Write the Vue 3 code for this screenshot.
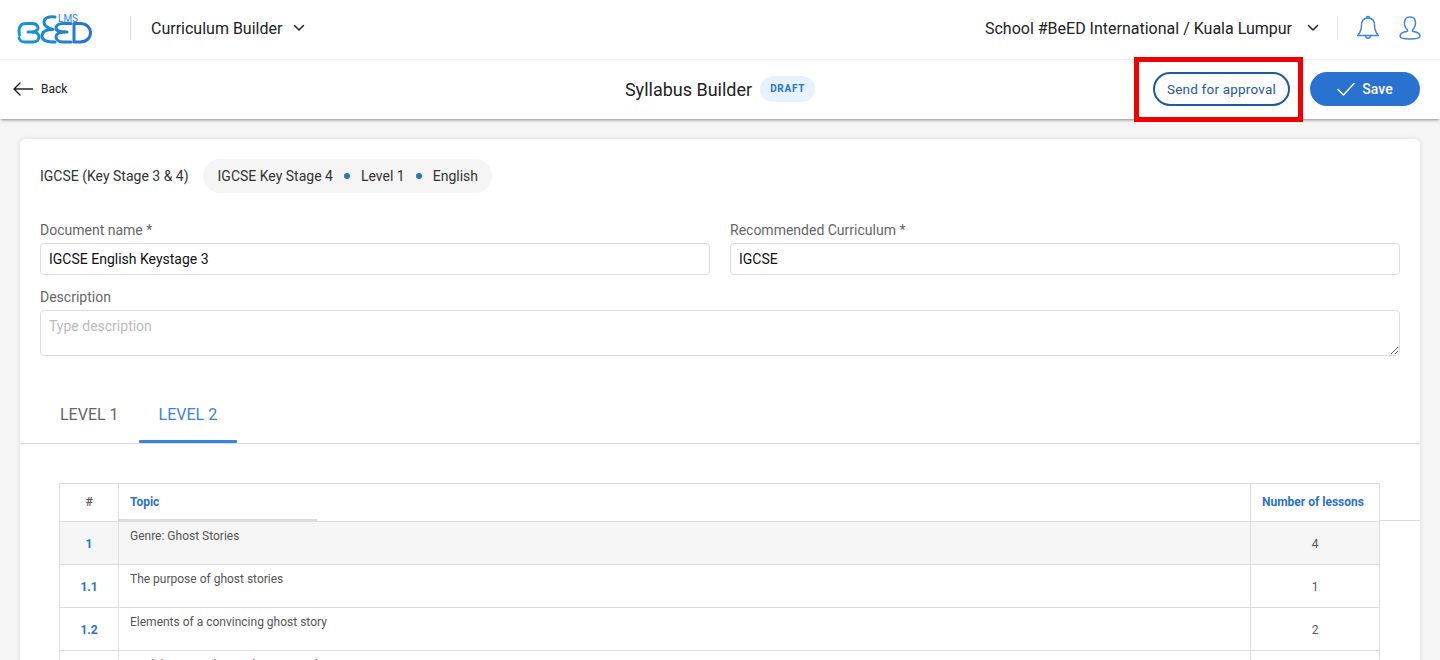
<script setup>
const rows = [
  { n: '1', topic: 'Genre: Ghost Stories', lessons: 4, head: true },
  { n: '1.1', topic: 'The purpose of ghost stories', lessons: 1 },
  { n: '1.2', topic: 'Elements of a convincing ghost story', lessons: 2 },
  { n: '1.3', topic: 'Model paragraph in a ghost story plan', lessons: 1 },
]
</script>

<template>
  <div class="page">
    <header class="topbar">
      <div class="logo">
        <svg width="76" height="36" viewBox="0 0 76 36" fill="none">
          <defs>
            <linearGradient id="lg" x1="0" y1="0" x2="76" y2="0" gradientUnits="userSpaceOnUse">
              <stop offset="0" stop-color="#0f9bd7" />
              <stop offset="1" stop-color="#2a70d2" />
            </linearGradient>
          </defs>
          <g stroke="url(#lg)" stroke-width="3" stroke-linecap="round" stroke-linejoin="round">
            <path d="M2.500 24C1 17 3 12.500 9 12.500h6C22 12.500 23.500 20 16 21c8 0 8 10 0 10H8c-3.500 0-5.500-2-6-4" />
            <path d="M11 21h5" />
            <path d="M38 6C32 5 27 7 27 11c0 4 3 6 9 7.500C29 18.500 25 20.500 25 25c0 5 5 6 13 6" />
            <path d="M54 12.500h-8c-5 0-7 2.500-7 4.500 0 3 3 4 11 4-8 0-11 1.500-11 4.500 0 2.500 2 5.500 7 5.500h8" />
            <path d="M57 12.500h6c14 0 14 18.500 0 18.500h-6z" />
          </g>
        </svg>
        <span class="lms">LMS</span>
      </div>
      <span class="divider"></span>
      <span class="top-title">Curriculum Builder</span>
      <svg class="chev" width="12" height="8" viewBox="0 0 12 8" fill="none"><path d="M1.500 1.500 6 6l4.500-4.500" stroke="#222" stroke-width="1.500" stroke-linecap="round" stroke-linejoin="round" /></svg>
      <div class="top-right">
        <span class="top-title">School #BeED International / Kuala Lumpur</span>
        <svg class="chev school-chev" width="12" height="8" viewBox="0 0 12 8" fill="none"><path d="M1.500 1.500 6 6l4.500-4.500" stroke="#222" stroke-width="1.500" stroke-linecap="round" stroke-linejoin="round" /></svg>
        <span class="divider right-div"></span>
        <svg class="bell" width="24" height="26" viewBox="0 0 24 26" fill="none" stroke="#3f86e0" stroke-width="1.500" stroke-linejoin="round" stroke-linecap="round">
          <path d="M12 3c-4.500 0-6.500 3.500-6.500 7.500 0 4.500-1.300 7-3.800 10h20.600c-2.500-3-3.800-5.500-3.800-10C18.500 6.500 16.500 3 12 3z" />
          <path d="M10.300 3.300C10.300 1 13.700 1 13.700 3.300" />
          <path d="M9.500 20.500c0 3.500 5 3.500 5 0" />
        </svg>
        <svg class="user" width="24" height="26" viewBox="0 0 24 26" fill="none" stroke="#3f86e0" stroke-width="1.500" stroke-linejoin="round">
          <path d="M12 2c-3.600 0-5.500 2.700-5.500 6 0 3 1.200 5.500 3 6.800v1.500C5.500 17 2 18.300 2 21c0 2.300 4.500 3 10 3s10-.7 10-3c0-2.700-3.500-4-7.500-4.700v-1.500c1.800-1.300 3-3.800 3-6.800 0-3.300-1.900-6-5.500-6z" />
        </svg>
      </div>
    </header>

    <div class="subbar">
      <div class="back">
        <svg width="20" height="14" viewBox="0 0 20 14" fill="none"><path d="M20 7H1.200M7 1 1 7l6 6" stroke="#222" stroke-width="1.400" stroke-linecap="round" stroke-linejoin="round" /></svg>
        <span>Back</span>
      </div>
      <div class="sub-center">
        <span class="sub-title">Syllabus Builder</span>
        <span class="draft">DRAFT</span>
      </div>
      <div class="actions">
        <button class="btn-outline" type="button">Send for approval</button>
        <button class="btn-solid" type="button">
          <svg width="18" height="14" viewBox="0 0 18 14" fill="none"><path d="M1 7.500 6.500 13 17 1.500" stroke="#fff" stroke-width="1.500" stroke-linecap="round" stroke-linejoin="round" /></svg>
          Save
        </button>
      </div>
    </div>

    <span class="highlight"></span>

    <main class="content">
      <section class="card">
        <div class="intro">
          <div class="crumb-row">
            <span class="crumb-lead">IGCSE (Key Stage 3 &amp; 4)</span>
            <div class="pill">
              <span>IGCSE Key Stage 4</span>
              <i class="dot"></i>
              <span>Level 1</span>
              <i class="dot"></i>
              <span>English</span>
            </div>
          </div>
          <div class="fields">
            <label class="field">
              <span class="label">Document name *</span>
              <input class="input" type="text" value="IGCSE English Keystage 3" />
            </label>
            <label class="field">
              <span class="label">Recommended Curriculum *</span>
              <input class="input" type="text" value="IGCSE" />
            </label>
          </div>
          <label class="field desc">
            <span class="label">Description</span>
            <textarea class="input area" placeholder="Type description"></textarea>
          </label>
        </div>

        <div class="tabs">
          <span class="tab">LEVEL 1</span>
          <span class="tab active">LEVEL 2</span>
        </div>

        <div class="table-wrap">
          <span class="head-line"></span>
          <span class="head-mark"></span>
          <table class="grid">
            <colgroup>
              <col class="c-n" />
              <col />
              <col class="c-l" />
            </colgroup>
            <thead>
              <tr>
                <th class="hash">#</th>
                <th class="topic-h">Topic</th>
                <th class="num-h">Number of lessons</th>
              </tr>
            </thead>
            <tbody>
              <tr v-for="row in rows" :key="row.n" :class="{ shaded: row.head }">
                <td class="num">{{ row.n }}</td>
                <td class="topic">{{ row.topic }}</td>
                <td class="count">{{ row.lessons }}</td>
              </tr>
            </tbody>
          </table>
        </div>
      </section>
    </main>
  </div>
</template>

<style>
html, body { margin: 0; background: #f5f5f5; }
</style>

<style scoped>
.page {
  position: relative;
  height: 660px;
  overflow: hidden;
  background: #f5f5f5;
  font-family: Roboto, "Liberation Sans", sans-serif;
  color: #222;
}
.topbar {
  height: 59px;
  box-sizing: border-box;
  display: flex;
  align-items: center;
  background: #fff;
  padding: 0 18px 3px 17px;
}
.logo {
  position: relative;
  width: 76px;
  height: 36px;
  margin-top: 1px;
}
.logo svg { display: block; }
.lms {
  position: absolute;
  left: 41px;
  top: 2px;
  font-size: 10px;
  line-height: 11px;
  color: #2a86dc;
}
.divider {
  width: 1px;
  height: 24px;
  background: #ddd;
  margin: 0 20px 0 37px;
}
.top-title { font-size: 16px; }
.chev { margin-left: 11px; }
.top-right {
  margin-left: auto;
  display: flex;
  align-items: center;
}
.school-chev { margin-left: 15px; }
.right-div { margin: 0 18px 0 18px; }
.user { margin-left: 18px; }
.subbar {
  position: relative;
  height: 60px;
  box-sizing: border-box;
  display: grid;
  grid-template-columns: 1fr auto 1fr;
  align-items: center;
  padding: 0 20px 1px;
  background: #fff;
  border-top: 1px solid #f0f0f0;
  box-shadow: 0 2px 3px -1px rgba(0, 0, 0, 0.45);
}
.back {
  display: flex;
  align-items: center;
  gap: 8px;
  margin-left: -7px;
  font-size: 12px;
}
.sub-center {
  display: flex;
  align-items: center;
  gap: 8px;
}
.sub-title { font-size: 18px; }
.draft {
  height: 26px;
  line-height: 26px;
  padding: 0 10px;
  border-radius: 13px;
  background: #e6f2fd;
  color: #2a72d0;
  font-size: 10px;
  font-weight: 700;
  letter-spacing: 0.7px;
}
.actions {
  display: flex;
  justify-content: flex-end;
  align-items: center;
  gap: 20px;
}
.btn-outline, .btn-solid {
  font-family: inherit;
  height: 34px;
  border-radius: 17px;
  cursor: pointer;
}
.btn-outline {
  width: 137px;
  padding: 0;
  background: #fff;
  border: 2px solid #1e5aa0;
  color: #1e5aa0;
  font-size: 13.500px;
  letter-spacing: 0.2px;
}
.btn-solid {
  width: 110px;
  display: flex;
  align-items: center;
  justify-content: center;
  gap: 7px;
  border: 0;
  background: #2a72d0;
  color: #fff;
  font-size: 14px;
  font-weight: 500;
}
.highlight {
  position: absolute;
  left: 1134px;
  top: 57px;
  width: 159px;
  height: 55px;
  border: 5px solid #f00000;
  z-index: 3;
}
.content { padding: 20px 20px 0; }
.card {
  background: #fff;
  border-radius: 6px 6px 0 0;
  box-shadow: 0 0 5px rgba(0, 0, 0, 0.1);
  padding-bottom: 40px;
}
.intro { padding: 20px 20px 0; }
.crumb-row {
  display: flex;
  align-items: center;
  gap: 14px;
  font-size: 14px;
  color: #333;
}
.pill {
  height: 34px;
  display: flex;
  align-items: center;
  gap: 11px;
  padding: 0 14px 0 15px;
  border-radius: 17px;
  background: #f5f5f5;
}
.dot {
  width: 6px;
  height: 6px;
  border-radius: 50%;
  background: #2a72d0;
}
.fields {
  display: grid;
  grid-template-columns: 1fr 1fr;
  gap: 20px;
  margin-top: 28px;
}
.field { display: block; }
.label {
  display: block;
  font-size: 14px;
  line-height: 18px;
  color: #666;
  margin-bottom: 4px;
}
.input {
  display: block;
  width: 100%;
  box-sizing: border-box;
  height: 32px;
  padding: 0 8px;
  border: 1px solid #ddd;
  border-radius: 4px;
  font: 14px Roboto, "Liberation Sans", sans-serif;
  color: #111;
  background: #fff;
  outline: none;
}
.input::placeholder { color: #bbb; }
.desc { margin-top: 13px; }
.area {
  height: 46px;
  padding: 7px 8px;
}
.tabs {
  display: flex;
  height: 62px;
  margin-top: 25px;
  padding-left: 20px;
  border-bottom: 1px solid #ddd;
}
.tab {
  position: relative;
  padding: 14px 20px 0;
  font-size: 16px;
  line-height: 40px;
  height: 62px;
  box-sizing: border-box;
  color: #666;
}
.tab.active { color: #3b82e0; }
.tab.active::after {
  content: "";
  position: absolute;
  left: 0;
  right: 0;
  bottom: 0;
  height: 3px;
  border-radius: 1px;
  background: #3b82e0;
}
.table-wrap {
  position: relative;
  margin: 39px 0 0 39px;
  width: 1321px;
}
.head-line {
  position: absolute;
  left: 1321px;
  top: 37px;
  width: 40px;
  height: 1px;
  background: #ddd;
}
.head-mark {
  position: absolute;
  left: 60px;
  top: 36px;
  width: 198px;
  height: 2px;
  background: #ddd;
}
.grid {
  width: 100%;
  table-layout: fixed;
  border-collapse: collapse;
  font-size: 12px;
}
.c-n { width: 59px; }
.c-l { width: 129px; }
.grid th, .grid td {
  border: 1px solid #ddd;
  padding: 0 11px;
}
.grid th { padding-bottom: 2px; }
.grid thead tr { height: 38px; }
.grid tbody tr { height: 43px; }
.hash { color: #555; font-weight: 500; text-align: center; }
.topic-h { color: #2a72d0; font-weight: 700; text-align: left; }
.num-h { color: #2a72d0; font-weight: 700; text-align: left; }
.shaded td { background: #f5f5f5; }
.grid .num {
  color: #2a72d0;
  font-weight: 700;
  text-align: center;
  padding-top: 2px;
}
.grid .topic {
  vertical-align: top;
  padding-top: 7px;
  color: #555;
  line-height: 14px;
}
.grid .count {
  text-align: center;
  color: #555;
  padding-top: 2px;
}
</style>
